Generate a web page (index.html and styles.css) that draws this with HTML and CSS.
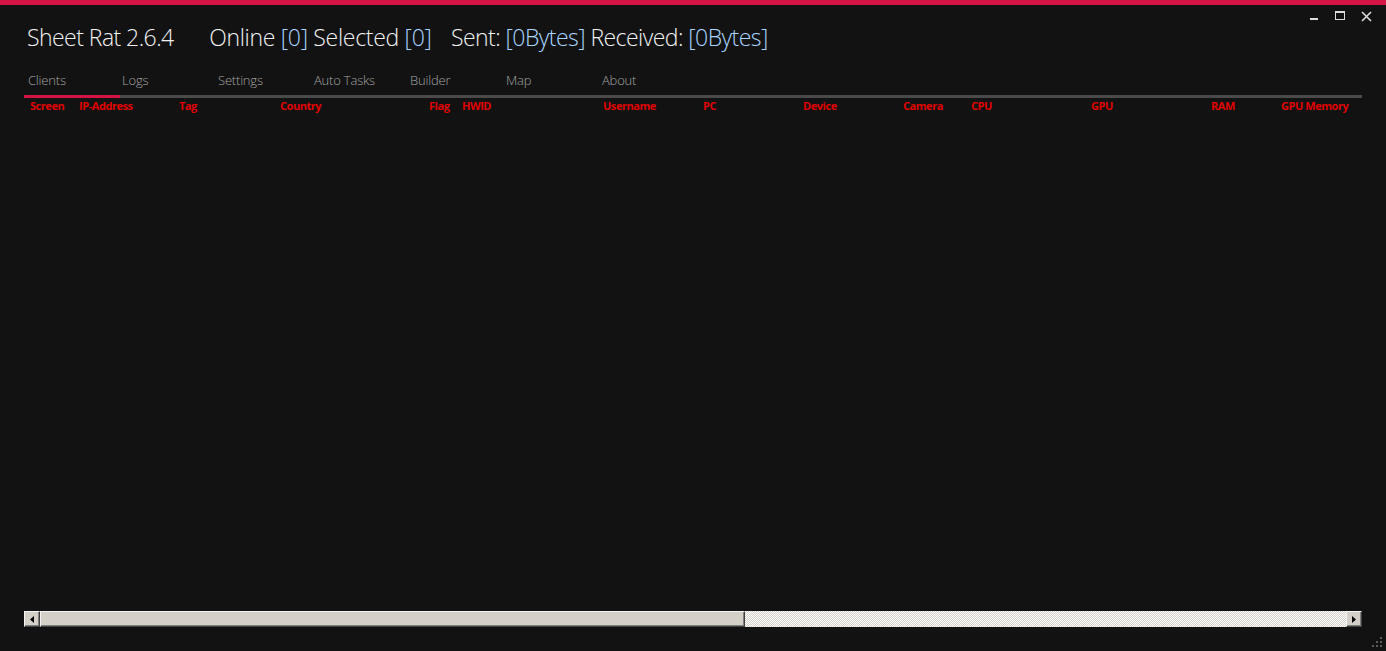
FILE: index.html
```html
<!DOCTYPE html>
<html>
<head>
<meta charset="utf-8">
<link rel="stylesheet" href="styles.css">
</head>
<body>
<div class="app">
  <div class="topbar"></div>
  <div class="winctl">
    <svg width="10" height="10" viewBox="0 0 10 10" class="ic-min"><rect x="0" y="7" width="8" height="2" fill="#dcdcdc"/></svg>
    <svg width="11" height="10" viewBox="0 0 11 10" class="ic-max"><rect x="0.5" y="0.5" width="9" height="8" fill="none" stroke="#dcdcdc" stroke-width="1"/><rect x="0" y="0" width="10" height="2" fill="#dcdcdc"/></svg>
    <svg width="11" height="11" viewBox="0 0 11 11" class="ic-close"><path d="M1 1 L10 10 M10 1 L1 10" stroke="#dcdcdc" stroke-width="1.6"/></svg>
  </div>
  <div class="title">
    <span class="t1">Sheet Rat 2.6.4</span>
    <span class="t2">Online <span class="num">[0]</span> Selected <span class="num">[0]</span></span>
    <span class="t3">Sent: <span class="num">[0Bytes]</span> Received: <span class="num">[0Bytes]</span></span>
  </div>
  <div class="main">
    <div class="tabs">
      <div class="tab active">Clients</div>
      <div class="tab">Logs</div>
      <div class="tab">Settings</div>
      <div class="tab">Auto Tasks</div>
      <div class="tab">Builder</div>
      <div class="tab">Map</div>
      <div class="tab">About</div>
    </div>
    <div class="tabline"><div class="tabline-active"></div></div>
    <div class="cols">
      <div>Screen</div><div>IP-Address</div><div>Tag</div><div>Country</div><div>Flag</div><div>HWID</div><div>Username</div><div>PC</div><div>Device</div><div>Camera</div><div>CPU</div><div>GPU</div><div>RAM</div><div>GPU Memory</div>
    </div>
    <div class="list"></div>
    <div class="hscroll">
      <div class="sbtn"><svg width="4" height="7" viewBox="0 0 4 7"><path d="M4 0 L0 3.5 L4 7 Z" fill="#000"/></svg></div>
      <div class="thumb"></div>
      <div class="track"></div>
      <div class="sbtn"><svg width="4" height="7" viewBox="0 0 4 7"><path d="M0 0 L4 3.5 L0 7 Z" fill="#000"/></svg></div>
    </div>
  </div>
  <svg class="grip" width="10" height="10" viewBox="0 0 10 10">
    <rect x="8" y="0" width="2" height="2" fill="#5a5a5a"/>
    <rect x="4" y="4" width="2" height="2" fill="#5a5a5a"/>
    <rect x="8" y="4" width="2" height="2" fill="#5a5a5a"/>
    <rect x="0" y="8" width="2" height="2" fill="#5a5a5a"/>
    <rect x="4" y="8" width="2" height="2" fill="#5a5a5a"/>
    <rect x="8" y="8" width="2" height="2" fill="#5a5a5a"/>
  </svg>
</div>
</body>
</html>
```
FILE: styles.css
```css
html, body {
  margin: 0;
  padding: 0;
  background: #121212;
  height: 100%;
  overflow: hidden;
}
.app {
  position: relative;
  height: 651px;
  display: flex;
  flex-direction: column;
  font-family: "Open Sans", "Segoe UI", sans-serif;
}
.topbar {
  height: 5px;
  background: #d31445;
}
.winctl {
  position: absolute;
  top: 11px;
  right: 14px;
  display: flex;
  align-items: flex-start;
  gap: 15px;
}
.title {
  margin-top: 16px;
  padding-left: 27px;
  height: 32px;
  line-height: 32px;
  font-size: 23px;
  font-weight: 300;
  color: #f2f2f2;
  white-space: nowrap;
  letter-spacing: -0.55px;
}
.title .t2 { margin-left: 30px; letter-spacing: -0.3px; }
.title .t3 { margin-left: 14px; letter-spacing: -0.55px; }
.title .num { color: #a9d6ff; }
.main {
  flex: 1;
  display: flex;
  flex-direction: column;
  padding: 0 24px 24px 24px;
}
.tabs {
  display: flex;
  margin-top: 18px;
  height: 24px;
}
.tab {
  width: 96px;
  padding-left: 2px;
  box-sizing: border-box;
  font-size: 13px;
  line-height: 18px;
  font-weight: 300;
  color: #a3a3a3;
  letter-spacing: -0.2px;
}
.tab.active {
  padding-left: 4px;
}
.tabline {
  height: 3px;
  background: #4a4a4a;
  display: flex;
}
.tabline-active {
  width: 96px;
  background: #d31445;
}
.cols {
  display: grid;
  grid-template-columns: 49px 100px 101px 149px 33px 141px 100px 100px 100px 68px 120px 120px 70px 1fr;
  padding-left: 6px;
  margin-top: 0;
  height: 15px;
  font-size: 11px;
  line-height: 15px;
  font-weight: 700;
  color: #e00000;
  white-space: nowrap;
  letter-spacing: -0.45px;
}
.list {
  flex: 1;
}
.hscroll {
  height: 16px;
  display: flex;
}
.sbtn {
  width: 16px;
  height: 16px;
  box-sizing: border-box;
  background: #d4d0c8;
  border-top: 1px solid #f4f4f4;
  border-left: 1px solid #f4f4f4;
  border-right: 1px solid #404040;
  border-bottom: 1px solid #404040;
  box-shadow: inset -1px -1px 0 #808080;
  display: flex;
  align-items: center;
  justify-content: center;
}
.thumb {
  width: 705px;
  height: 16px;
  box-sizing: border-box;
  background: #d4d0c8;
  border-top: 1px solid #f4f4f4;
  border-left: 1px solid #f4f4f4;
  border-right: 1px solid #404040;
  border-bottom: 1px solid #404040;
  box-shadow: inset -1px -1px 0 #808080;
}
.track {
  flex: 1;
  background-color: #ffffff;
  background-image:
    linear-gradient(45deg, #d4d0c8 25%, transparent 25%, transparent 75%, #d4d0c8 75%),
    linear-gradient(45deg, #d4d0c8 25%, transparent 25%, transparent 75%, #d4d0c8 75%);
  background-size: 2px 2px;
  background-position: 0 0, 1px 1px;
}
.grip {
  position: absolute;
  right: 4px;
  bottom: 4px;
}
```
